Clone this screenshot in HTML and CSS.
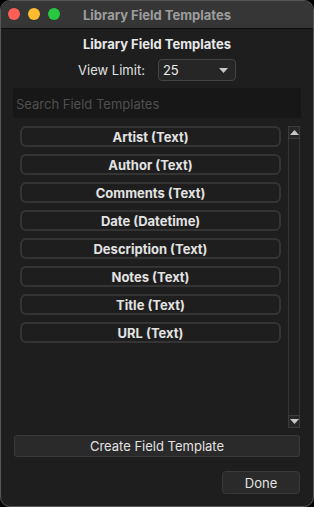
FILE: index.html
```html
<!DOCTYPE html>
<html>
<head>
<meta charset="utf-8">
<link rel="stylesheet" href="styles.css">
</head>
<body>
<div class="window">
  <div class="titlebar">
    <div class="lights">
      <span class="light red"></span>
      <span class="light yellow"></span>
      <span class="light green"></span>
    </div>
    <div class="title">Library Field Templates</div>
  </div>
  <div class="content">
    <div class="heading">Library Field Templates</div>
    <div class="limit-row">
      <span class="limit-label">View Limit:</span>
      <div class="select">
        <span>25</span>
        <svg class="caret" width="9" height="5" viewBox="0 0 9 5"><path d="M0 0 H9 L4.5 5 Z" fill="#c8c8c8"/></svg>
      </div>
    </div>
    <div class="search">Search Field Templates</div>
    <div class="list-area">
      <div class="items">
        <div class="item">Artist (Text)</div>
        <div class="item">Author (Text)</div>
        <div class="item">Comments (Text)</div>
        <div class="item">Date (Datetime)</div>
        <div class="item">Description (Text)</div>
        <div class="item">Notes (Text)</div>
        <div class="item">Title (Text)</div>
        <div class="item">URL (Text)</div>
      </div>
      <div class="scrollbar">
        <div class="sb-btn"><svg width="9" height="5" viewBox="0 0 9 5"><path d="M0 5 H9 L4.5 0 Z" fill="#c8c8c8"/></svg></div>
        <div class="sb-track"></div>
        <div class="sb-btn"><svg width="9" height="5" viewBox="0 0 9 5"><path d="M0 0 H9 L4.5 5 Z" fill="#c8c8c8"/></svg></div>
      </div>
    </div>
    <div class="create-btn">Create Field Template</div>
    <div class="footer">
      <div class="done-btn">Done</div>
    </div>
  </div>
</div>
</body>
</html>
```

FILE: styles.css
```css
html, body {
  margin: 0;
  padding: 0;
  background: #000;
}
body {
  width: 314px;
  height: 507px;
  font-family: Inter, "Liberation Sans", sans-serif;
  font-size: 13px;
  color: #e6e6e6;
}
.window {
  box-sizing: border-box;
  width: 314px;
  height: 507px;
  border: 1px solid #575757;
  border-radius: 10px;
  overflow: hidden;
  background: #1e1e1e;
  display: flex;
  flex-direction: column;
}
.titlebar {
  position: relative;
  height: 27px;
  background: #363636;
  border-bottom: 1px solid #0e0e0e;
  display: flex;
  align-items: center;
  justify-content: center;
  flex: none;
}
.lights {
  position: absolute;
  left: 7px;
  top: 7px;
  display: flex;
  gap: 8px;
}
.light {
  width: 12px;
  height: 12px;
  border-radius: 50%;
  display: block;
}
.red { background: #fe5f57; }
.yellow { background: #febc2e; }
.green { background: #28c840; }
.title {
  font-weight: 700;
  font-size: 13px;
  color: #9d9d9d;
  margin-top: 1px;
}
.content {
  flex: 1;
  display: flex;
  flex-direction: column;
  padding: 7px 12px 0 12px;
}
.heading {
  text-align: center;
  font-weight: 700;
  font-size: 13px;
  line-height: 16px;
  color: #e8e8e8;
}
.limit-row {
  margin-top: 7px;
  display: flex;
  justify-content: center;
  align-items: center;
  gap: 13px;
}
.limit-label {
  color: #e0e0e0;
}
.select {
  box-sizing: border-box;
  width: 78px;
  height: 22px;
  border: 1px solid #444;
  border-radius: 4px;
  background: #262626;
  display: flex;
  align-items: center;
  justify-content: space-between;
  padding: 0 7px 0 4px;
  color: #ededed;
}
.caret { display: block; }
.search {
  margin-top: 7px;
  height: 30px;
  background: #171717;
  border-radius: 2px;
  color: #4f4f4f;
  display: flex;
  align-items: center;
  padding-left: 3px;
  padding-top: 2px;
  box-sizing: border-box;
}
.list-area {
  margin-top: 8px;
  display: flex;
  padding-left: 7px;
  padding-right: 1px;
}
.items {
  width: 261px;
  display: flex;
  flex-direction: column;
  gap: 7px;
  margin-right: 7px;
}
.item {
  box-sizing: border-box;
  height: 21px;
  border: 2px solid #343434;
  border-radius: 6px;
  display: flex;
  align-items: center;
  justify-content: center;
  font-weight: 700;
  color: #e2e2e2;
}
.scrollbar {
  width: 12px;
  height: 302px;
  display: flex;
  flex-direction: column;
}
.sb-btn {
  box-sizing: border-box;
  height: 13px;
  border: 1px solid #3c3c3c;
  background: #262626;
  display: flex;
  align-items: center;
  justify-content: center;
  flex: none;
}
.sb-btn svg { display: block; }
.sb-track {
  flex: 1;
  box-sizing: border-box;
  border-left: 1px solid #333;
  border-right: 1px solid #333;
  background: #1f1f1f;
}
.create-btn {
  margin: 7px 1px 0 1px;
  box-sizing: border-box;
  height: 22px;
  border: 1px solid #3a3a3a;
  border-radius: 3px;
  background: #2a2a2a;
  display: flex;
  align-items: center;
  justify-content: center;
  color: #e2e2e2;
}
.footer {
  margin-top: 14px;
  margin-right: 1px;
  display: flex;
  justify-content: flex-end;
}
.done-btn {
  box-sizing: border-box;
  width: 78px;
  height: 23px;
  border: 1px solid #3a3a3a;
  border-radius: 4px;
  background: #2a2a2a;
  display: flex;
  align-items: center;
  justify-content: center;
  color: #e2e2e2;
}
```
